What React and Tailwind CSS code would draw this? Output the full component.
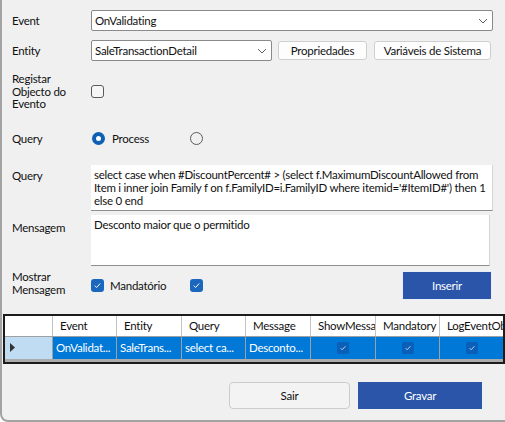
import React from "react";

const Chevron = () => (
  <svg width="10" height="6" viewBox="0 0 10 6" className="shrink-0">
    <path d="M1 1l4 4 4-4" fill="none" stroke="#606060" strokeWidth="1" />
  </svg>
);

const Check = ({ size = 9, color = "#fff" }) => (
  <svg width={size} height={size} viewBox="0 0 10 10">
    <path d="M2 5.2l2 2 4-4.4" fill="none" stroke={color} strokeWidth="1.1" />
  </svg>
);

const Combo = ({ value, className }) => (
  <div
    className={
      "flex h-[21px] items-center justify-between rounded-[2px] border border-[#8a8a8a] bg-white pl-[3px] pr-[4px] " +
      className
    }
  >
    <span>{value}</span>
    <Chevron />
  </div>
);

const BlueCheck = () => (
  <div className="flex h-[13px] w-[13px] shrink-0 items-center justify-center rounded-[3px] bg-[#1a67bd]">
    <Check />
  </div>
);

const columns = [
  { name: "Event", w: "w-[64px]", value: "OnValidat..." },
  { name: "Entity", w: "w-[65px]", value: "SaleTrans..." },
  { name: "Query", w: "w-[64px]", value: "select ca..." },
  { name: "Message", w: "w-[65px]", value: "Desconto..." },
  { name: "ShowMessage", w: "w-[65px]", check: true },
  { name: "Mandatory", w: "w-[64px]", check: true },
  { name: "LogEventObject", w: "flex-1", check: true, last: true },
];

export default function App() {
  return (
    <div
      className="h-[422px] w-[505px] overflow-hidden rounded-bl-lg border-b-2 border-l-2 border-[#a3a3a3] bg-[#f0f0f0] text-[11.5px] leading-[13px] tracking-[-0.25px] text-[#111]"
      style={{ fontFamily: 'Lato, "Liberation Sans", sans-serif' }}
    >
      {/* Event */}
      <div className="mt-[10px] flex items-center">
        <div className="w-[89px] pl-[10px]">Event</div>
        <Combo value="OnValidating" className="w-[402px]" />
      </div>

      {/* Entity */}
      <div className="mt-[9px] flex items-center">
        <div className="w-[89px] pl-[10px]">Entity</div>
        <Combo value="SaleTransactionDetail" className="w-[181px]" />
        <button className="ml-[6px] h-[19px] w-[89px] whitespace-nowrap rounded-[3px] border border-[#cfcfcf] bg-[#fdfdfd]">
          Propriedades
        </button>
        <button className="ml-[7px] h-[19px] w-[117px] whitespace-nowrap rounded-[3px] border border-[#cfcfcf] bg-[#fdfdfd]">
          Variáveis de Sistema
        </button>
      </div>

      {/* Registar */}
      <div className="mt-[12px] flex items-center">
        <div className="w-[89px] pl-[10px] leading-[12.5px]">
          Registar
          <br />
          Objecto do
          <br />
          Evento
        </div>
        <div className="h-[13px] w-[13px] rounded-[3px] border border-[#5a5a5a] bg-[#f6f6f6]" />
      </div>

      {/* Query radios */}
      <div className="mt-[21px] flex h-[14px] items-center">
        <div className="w-[90px] pl-[10px]">Query</div>
        <div className="flex h-[13px] w-[13px] items-center justify-center rounded-full bg-[#0f5fb5]">
          <div className="h-[5px] w-[5px] rounded-full bg-white" />
        </div>
        <span className="ml-[7px] w-[78px]">Process</span>
        <div className="h-[13px] w-[13px] rounded-full border border-[#5a5a5a]" />
      </div>

      {/* Query text */}
      <div className="mt-[19px] flex">
        <div className="w-[89px] pl-[10px] pt-[4px]">Query</div>
        <div className="h-[46px] w-[402px] border-b border-r border-[#8f8f8f] border-r-[#d4d4d4] bg-white px-[3px] pt-[3px]">
          select case when #DiscountPercent# &gt; (select f.MaximumDiscountAllowed from Item i inner join Family f on f.FamilyID=i.FamilyID where itemid='#ItemID#') then 1 else 0 end
        </div>
      </div>

      {/* Mensagem */}
      <div className="mt-[4px] flex">
        <div className="w-[89px] pl-[10px] pt-[6px]">Mensagem</div>
        <div className="h-[51px] w-[399px] border-b border-r border-[#8f8f8f] border-r-[#d4d4d4] bg-white px-[3px] pt-[3px]">
          Desconto maior que o permitido
        </div>
      </div>

      {/* Mostrar Mensagem */}
      <div className="mt-[3px] flex items-start">
        <div className="w-[89px] pl-[10px] pt-[1px]">
          Mostrar
          <br />
          Mensagem
        </div>
        <div className="mt-[10px] flex items-center">
          <BlueCheck />
          <span className="ml-[6px] w-[80px]">Mandatório</span>
          <BlueCheck />
        </div>
        <button className="ml-auto mr-[13px] mt-[2px] h-[29px] w-[90px] border border-[#e8eef8] bg-[#2b55a8] text-white">
          Inserir
        </button>
      </div>

      {/* Grid */}
      <div className="ml-[1px] mt-[14px] flex h-[50px] flex-col border-2 border-[#1c1c1c] bg-[#ababab]">
        <div className="flex h-[20px] bg-white">
          <div className="w-[48px] shrink-0 border-r border-[#c4c4c4]" />
          {columns.map((c) => (
            <div
              key={c.name}
              className={
                "flex items-center overflow-hidden whitespace-nowrap pl-[7px] " +
                c.w +
                (c.last ? "" : " shrink-0 border-r border-[#c4c4c4]")
              }
            >
              {c.name}
            </div>
          ))}
        </div>
        <div className="flex h-[23px] border-t border-[#a0a0a0]">
          <div className="flex w-[48px] shrink-0 items-center border-r border-[#a0a0a0] bg-[#bfdcf3] pl-[5px]">
            <svg width="6" height="9" viewBox="0 0 6 9">
              <path d="M0 0l5 4.5L0 9z" fill="#333" />
            </svg>
          </div>
          {columns.map((c) => (
            <div
              key={c.name}
              className={
                "flex items-center overflow-hidden whitespace-nowrap bg-[#0078d7] text-white " +
                c.w +
                (c.last ? "" : " shrink-0 border-r border-[#a0a0a0]") +
                (c.check ? " justify-center" : " pl-[3px]")
              }
            >
              {c.check ? (
                <div className="flex h-[12px] w-[12px] items-center justify-center rounded-[2px] bg-[#0a5fb8]">
                  <Check size={8} color="#cfe3f7" />
                </div>
              ) : (
                c.value
              )}
            </div>
          ))}
        </div>
      </div>

      {/* Footer buttons */}
      <div className="mt-[18px] flex">
        <button className="ml-[227px] h-[27px] w-[121px] rounded-[4px] border border-[#cccccc] bg-[#f3f3f3]">
          Sair
        </button>
        <button className="ml-[8px] h-[27px] w-[124px] bg-[#2b55a8] text-white">
          Gravar
        </button>
      </div>
    </div>
  );
}
